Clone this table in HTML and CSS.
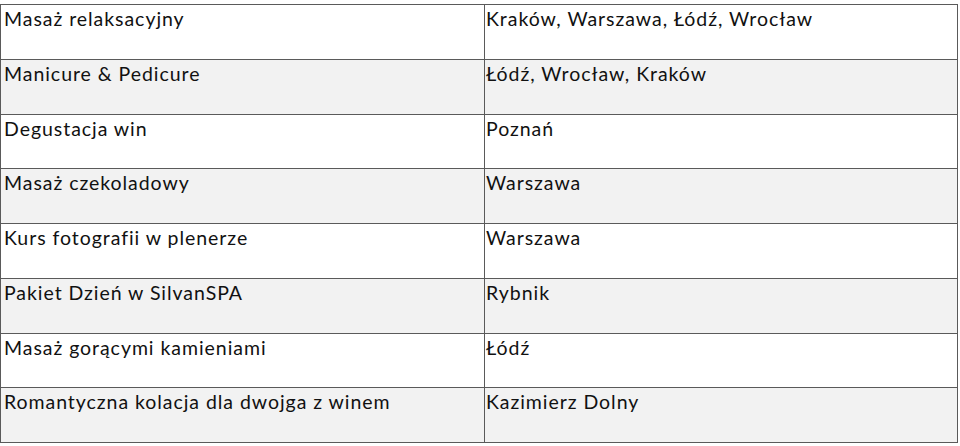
FILE: index.html
```html
<!DOCTYPE html>
<html lang="pl">
<head>
<meta charset="utf-8">
<link rel="stylesheet" href="styles.css">
</head>
<body>
<table class="offers">
  <tbody>
    <tr><td class="name">Masaż relaksacyjny</td><td class="city">Kraków, Warszawa, Łódź, Wrocław</td></tr>
    <tr class="alt"><td class="name">Manicure &amp; Pedicure</td><td class="city">Łódź, Wrocław, Kraków</td></tr>
    <tr><td class="name">Degustacja win</td><td class="city">Poznań</td></tr>
    <tr class="alt"><td class="name">Masaż czekoladowy</td><td class="city">Warszawa</td></tr>
    <tr><td class="name">Kurs fotografii w plenerze</td><td class="city">Warszawa</td></tr>
    <tr class="alt"><td class="name">Pakiet Dzień w SilvanSPA</td><td class="city">Rybnik</td></tr>
    <tr><td class="name">Masaż gorącymi kamieniami</td><td class="city">Łódź</td></tr>
    <tr class="alt"><td class="name">Romantyczna kolacja dla dwojga z winem</td><td class="city">Kazimierz Dolny</td></tr>
  </tbody>
</table>
</body>
</html>
```
FILE: styles.css
```css
html, body {
  margin: 0;
  padding: 0;
  background: #ffffff;
}
body {
  padding: 4px 0 0 0;
  font-family: "Lato", "Liberation Sans", sans-serif;
  font-size: 19.5px;
  letter-spacing: 0.95px;
  color: #111111;
}
.offers {
  border-collapse: collapse;
  width: 958px;
  table-layout: fixed;
}
.offers tr {
  height: 54.75px;
  background: #ffffff;
}
.offers tr.alt {
  background: #f2f2f2;
}
.offers td {
  border: 1px solid #5a5a5a;
  padding: 2px 2px 0 3px;
  vertical-align: top;
  line-height: 24px;
  white-space: nowrap;
}
.offers td.name {
  width: 478px;
}
.offers td.city {
  padding-left: 1px;
}
```
